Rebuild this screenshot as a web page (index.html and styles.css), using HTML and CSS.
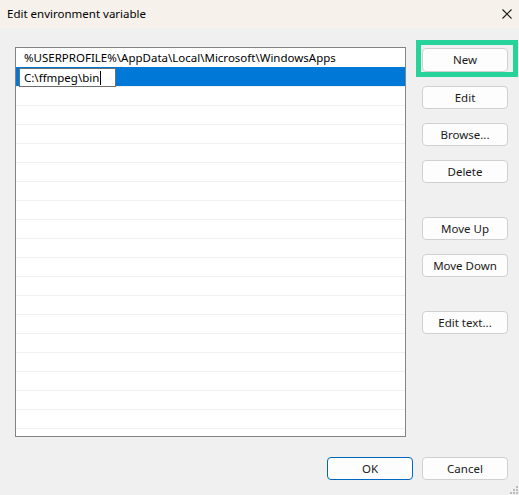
FILE: index.html
```html
<!DOCTYPE html>
<html>
<head>
<meta charset="utf-8">
<link rel="stylesheet" href="styles.css">
</head>
<body>
<div class="window">
  <div class="titlebar">
    <span class="title">Edit environment variable</span>
    <svg class="close" width="10" height="10" viewBox="0 0 10 10"><path d="M0.5 0.5 L9.5 9.5 M9.5 0.5 L0.5 9.5" stroke="#1a1a1a" stroke-width="1.1" fill="none"/></svg>
  </div>
  <div class="content">
    <div class="list">
      <div class="row first">%USERPROFILE%\AppData\Local\Microsoft\WindowsApps</div>
      <div class="row selected"><span class="editbox">C:\ffmpeg\bin<span class="caret"></span></span></div>
      <div class="row"></div><div class="row"></div><div class="row"></div><div class="row"></div>
      <div class="row"></div><div class="row"></div><div class="row"></div><div class="row"></div>
      <div class="row"></div><div class="row"></div><div class="row"></div><div class="row"></div>
      <div class="row"></div><div class="row"></div><div class="row"></div><div class="row"></div>
      <div class="row"></div><div class="row"></div><div class="row"></div>
    </div>
    <div class="side">
      <div class="btn-wrap">
        <button class="btn btn-new">New</button>
        <span class="highlight"></span>
      </div>
      <button class="btn">Edit</button>
      <button class="btn">Browse...</button>
      <button class="btn">Delete</button>
      <button class="btn group">Move Up</button>
      <button class="btn">Move Down</button>
      <button class="btn group">Edit text...</button>
    </div>
  </div>
  <div class="footer">
    <button class="btn btn-ok">OK</button>
    <button class="btn">Cancel</button>
  </div>
  <svg class="grip" width="8" height="8" viewBox="0 0 8 8">
    <rect x="6" y="0" width="2" height="2" fill="#bcbcbc"/>
    <rect x="3" y="3" width="2" height="2" fill="#bcbcbc"/>
    <rect x="6" y="3" width="2" height="2" fill="#bcbcbc"/>
    <rect x="0" y="6" width="2" height="2" fill="#bcbcbc"/>
    <rect x="3" y="6" width="2" height="2" fill="#bcbcbc"/>
    <rect x="6" y="6" width="2" height="2" fill="#bcbcbc"/>
  </svg>
</div>
</body>
</html>
```

FILE: styles.css
```css
* { box-sizing: border-box; }
html, body { margin: 0; padding: 0; }
body {
  width: 519px;
  height: 495px;
  background: #f0f0f0;
  font-family: "Noto Sans", "Open Sans", sans-serif;
  font-size: 11.5px;
  color: #000;
  overflow: hidden;
}
.window {
  position: relative;
  width: 519px;
  height: 495px;
  background: #f0f0f0;
}
.titlebar {
  height: 28px;
  background: #f6f1eb;
  display: flex;
  align-items: center;
  justify-content: space-between;
  padding: 0 7px 0 7px;
}
.title {
  font-size: 11.5px;
  line-height: 16px;
  margin-top: -1px;
}
.close {
  display: block;
  margin-top: -1px;
}
.content {
  display: grid;
  grid-template-columns: 391px 86px;
  column-gap: 16px;
  padding: 19px 11px 0 15px;
}
.list {
  height: 390px;
  border: 1px solid #838383;
  background: #fff;
  overflow: hidden;
}
.row {
  height: 19px;
  border-top: 1px solid #f0f0f0;
  padding-left: 8px;
  line-height: 18px;
  white-space: nowrap;
  color: #000;
}
.row.first {
  border-top-color: #fff;
}
.row.selected {
  background: #0078d7;
  border-top-color: #0078d7;
  padding-left: 3px;
}
.editbox {
  display: inline-flex;
  align-items: center;
  width: 97px;
  height: 19px;
  border: 1px solid #6e6e6e;
  background: #fff;
  padding-left: 4px;
  line-height: 16px;
  vertical-align: top;
}
.caret {
  display: inline-block;
  width: 1px;
  height: 14px;
  background: #000;
  margin-left: 1px;
}
.side {
  display: flex;
  flex-direction: column;
  padding-top: 1px;
}
.btn {
  display: flex;
  align-items: center;
  justify-content: center;
  width: 86px;
  height: 23px;
  margin: 0 0 14px 0;
  padding: 0 0 1px 0;
  font-family: inherit;
  font-size: 11.5px;
  color: #1a1a1a;
  background: #fdfdfd;
  border: 1px solid #d0d0d0;
  border-radius: 4px;
}
.btn.group { margin-top: 20px; }
.btn-wrap {
  position: relative;
  height: 24px;
  margin-bottom: 14px;
}
.btn-new { height: 24px; margin: 0; }
.highlight {
  position: absolute;
  left: -6px;
  top: -8px;
  width: 102px;
  height: 37px;
  border: 5px solid #27d39b;
  pointer-events: none;
}
.footer {
  display: flex;
  justify-content: flex-end;
  gap: 9px;
  padding: 20px 11px 0 0;
}
.footer .btn { margin: 0; }
.btn-ok { border-color: #0067c0; }
.grip {
  position: absolute;
  right: 1px;
  bottom: 1px;
}
```
